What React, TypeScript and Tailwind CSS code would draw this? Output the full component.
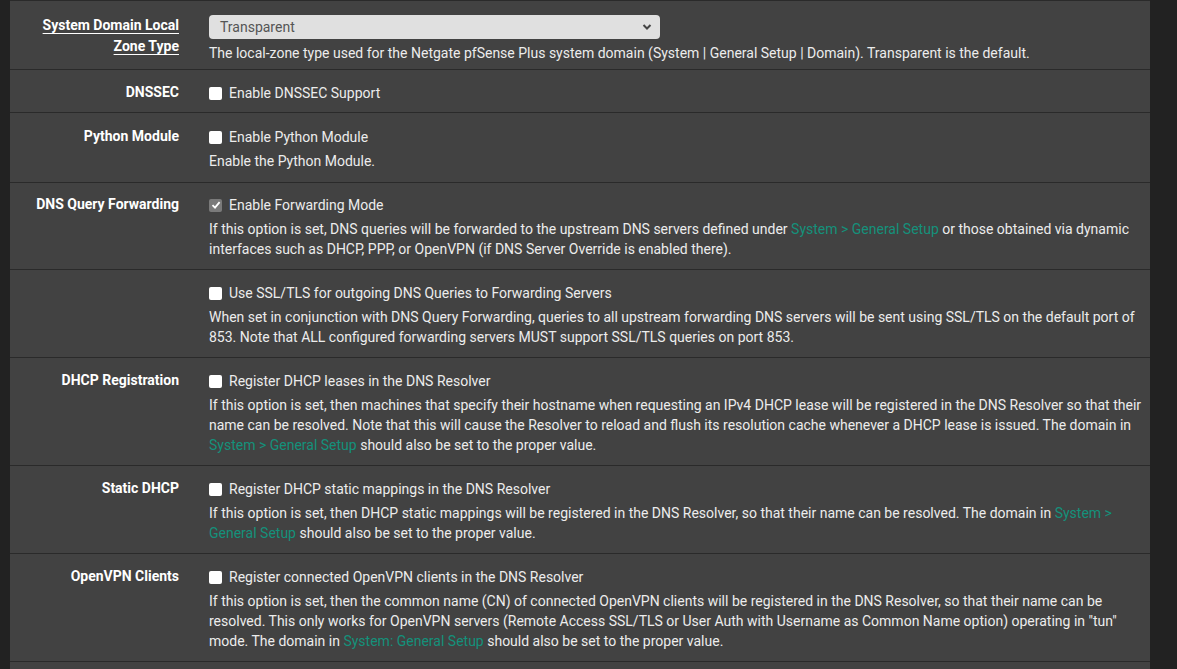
import React from "react";

const Link = ({ children }: { children: React.ReactNode }) => (
  <span className="text-[#14917b]">{children}</span>
);

const Check = ({ checked = false, label }: { checked?: boolean; label: string }) => (
  <div className="flex items-center h-[22px]">
    {checked ? (
      <span className="w-[13px] h-[13px] rounded-[2px] bg-[#7a7a7a] flex items-center justify-center mr-[7px]">
        <svg width="10" height="10" viewBox="0 0 10 10">
          <path d="M1.5 5.2 L4 7.6 L8.6 2.2" fill="none" stroke="#ffffff" strokeWidth="1.8" />
        </svg>
      </span>
    ) : (
      <span className="w-[13px] h-[13px] rounded-[2px] bg-white mr-[7px]" />
    )}
    <span>{label}</span>
  </div>
);

const Row = ({
  label,
  underline = false,
  children,
  pt = "pt-[12px]",
  pb = "pb-[10px]",
}: {
  label?: React.ReactNode;
  underline?: boolean;
  children: React.ReactNode;
  pt?: string;
  pb?: string;
}) => (
  <div className={`flex border-b border-[#2a2a2a] ${pt} ${pb}`}>
    <div className="w-[199px] shrink-0 pl-[15px] pr-[30px] text-right font-bold text-white leading-[21px] pt-[0px]">
      {underline ? <span className="underline underline-offset-[3px]">{label}</span> : label}
    </div>
    <div className="flex-1 pr-[8px] text-[#ececec]">{children}</div>
  </div>
);

const Help = ({ children, mt = "mt-[3px]" }: { children: React.ReactNode; mt?: string }) => (
  <div className={`${mt} leading-[20px]`}>{children}</div>
);

export default function App() {
  return (
    <div
      className="w-[1177px] h-[669px] overflow-hidden bg-[#222222] text-[14px]"
      style={{ fontFamily: "Roboto, 'Liberation Sans', sans-serif" }}
    >
      <div className="ml-[10px] w-[1140px] bg-[#424242] border-t border-[#2a2a2a]">
        <Row label={<>System Domain Local<br />Zone Type</>} underline pt="pt-[14px]" pb="pb-[6px]">
          <div className="w-[451px] h-[24px] rounded-[4px] bg-[#e0e0e0] flex items-center justify-between pl-[11px] pr-[8px] text-[#555555]">
            <span>Transparent</span>
            <svg width="10" height="8" viewBox="0 0 10 8">
              <path d="M1.5 2 L5 5.5 L8.5 2" fill="none" stroke="#444" strokeWidth="2" />
            </svg>
          </div>
          <Help mt="mt-[4px]">
            The local-zone type used for the Netgate pfSense Plus system domain (System | General Setup | Domain). Transparent is the default.
          </Help>
        </Row>
        <Row label="DNSSEC" pb="pb-[8px]">
          <Check label="Enable DNSSEC Support" />
        </Row>
        <Row label="Python Module" pt="pt-[13px]" pb="pb-[11px]">
          <Check label="Enable Python Module" />
          <Help>Enable the Python Module.</Help>
        </Row>
        <Row label="DNS Query Forwarding" pt="pt-[11px]">
          <Check checked label="Enable Forwarding Mode" />
          <Help>
            If this option is set, DNS queries will be forwarded to the upstream DNS servers defined under{" "}
            <Link>System &gt; General Setup</Link> or those obtained via dynamic interfaces such as DHCP, PPP, or OpenVPN (if DNS Server Override is enabled there).
          </Help>
        </Row>
        <Row label="">
          <Check label="Use SSL/TLS for outgoing DNS Queries to Forwarding Servers" />
          <Help>
            When set in conjunction with DNS Query Forwarding, queries to all upstream forwarding DNS servers will be sent using SSL/TLS on the default port of 853. Note that ALL configured forwarding servers MUST support SSL/TLS queries on port 853.
          </Help>
        </Row>
        <Row label="DHCP Registration">
          <Check label="Register DHCP leases in the DNS Resolver" />
          <Help>
            If this option is set, then machines that specify their hostname when requesting an IPv4 DHCP lease will be registered in the DNS Resolver so that their name can be resolved. Note that this will cause the Resolver to reload and flush its resolution cache whenever a DHCP lease is issued. The domain in{" "}
            <Link>System &gt; General Setup</Link> should also be set to the proper value.
          </Help>
        </Row>
        <Row label="Static DHCP">
          <Check label="Register DHCP static mappings in the DNS Resolver" />
          <Help>
            If this option is set, then DHCP static mappings will be registered in the DNS Resolver, so that their name can be resolved. The domain in{" "}
            <Link>System &gt; General Setup</Link> should also be set to the proper value.
          </Help>
        </Row>
        <Row label="OpenVPN Clients">
          <Check label="Register connected OpenVPN clients in the DNS Resolver" />
          <Help>
            If this option is set, then the common name (CN) of connected OpenVPN clients will be registered in the DNS Resolver, so that their name can be resolved. This only works for OpenVPN servers (Remote Access SSL/TLS or User Auth with Username as Common Name option) operating in "tun" mode. The domain in{" "}
            <Link>System: General Setup</Link> should also be set to the proper value.
          </Help>
        </Row>
        <div className="h-[40px]" />
      </div>
    </div>
  );
}
